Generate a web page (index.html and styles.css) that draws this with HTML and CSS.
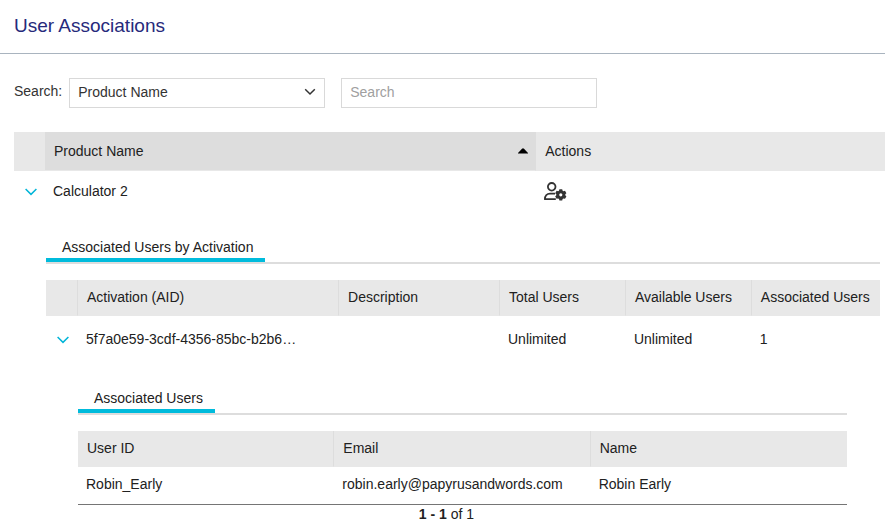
FILE: index.html
```html
<!DOCTYPE html>
<html lang="en">
<head>
    <meta charset="UTF-8">
    <meta name="viewport" content="width=device-width, initial-scale=1.0">
    <title>User Associations</title>
    <link rel="stylesheet" href="styles.css">
</head>
<body>

    <header class="page-header">
        <h1>User Associations</h1>
    </header>

    <main class="content">
        <!-- Search bar -->
        <form class="search-bar">
            <label for="search-field">Search:</label>
            <div class="select-box">
                <select id="search-field">
                    <option>Product Name</option>
                </select>
                <svg class="select-arrow" viewBox="0 0 12 8" aria-hidden="true">
                    <path d="M1.2 1.3 L6 6 L10.8 1.3"/>
                </svg>
            </div>
            <input type="text" id="search-text" placeholder="Search" aria-label="Search text">
        </form>

        <!-- Products -->
        <table class="grid products">
            <colgroup>
                <col class="col-toggle">
                <col class="col-product">
                <col>
            </colgroup>
            <thead>
                <tr>
                    <th></th>
                    <th class="sorted" aria-sort="ascending">
                        <div class="sort-label">
                            Product Name
                            <svg class="sort-arrow" viewBox="0 0 10 6" aria-hidden="true">
                                <path d="M0 5.6 L0 5 L4 0.7 Q5 -0.2 6 0.7 L10 5 L10 5.6 Z"/>
                            </svg>
                        </div>
                    </th>
                    <th>Actions</th>
                </tr>
            </thead>
            <tbody>
                <tr>
                    <td class="toggle-cell">
                        <button type="button" class="toggle" aria-label="Collapse Calculator 2">
                            <svg viewBox="0 0 12 8" aria-hidden="true"><path d="M0.6 1 L6 6.4 L11.4 1"/></svg>
                        </button>
                    </td>
                    <td>Calculator 2</td>
                    <td>
                        <button type="button" class="action" aria-label="Manage users">
                            <svg viewBox="0 0 22 19" aria-hidden="true">
                                <circle class="line" cx="7.7" cy="4.8" r="3.8"/>
                                <path class="line" d="M11 11.6 H6 C3 11.6 0.9 13.8 0.9 17.2 H11.8"/>
                                <path class="gear" fill-rule="evenodd" d="M15.4 7.2 H18.2 L18.6 8.7 L19.5 9.2 L21 8.8 L22.4 11.2 L21.3 12.3 V13.3 L22.4 14.4 L21 16.8 L19.5 16.4 L18.6 16.9 L18.2 18.4 H15.4 L15 16.9 L14.1 16.4 L12.6 16.8 L11.2 14.4 L12.3 13.3 V12.3 L11.2 11.2 L12.6 8.8 L14.1 9.2 L15 8.7 Z M16.8 11.2 A1.6 1.6 0 1 0 16.8 14.4 A1.6 1.6 0 1 0 16.8 11.2 Z"/>
                            </svg>
                        </button>
                    </td>
                </tr>
                <tr>
                    <td colspan="3" class="details">
                        <div class="tabs">
                            <button type="button" class="tab">Associated Users by Activation</button>
                        </div>

                        <!-- Activations -->
                        <table class="grid activations">
                            <colgroup>
                                <col class="col-toggle">
                                <col class="col-aid">
                                <col class="col-description">
                                <col class="col-count">
                                <col class="col-count">
                                <col>
                            </colgroup>
                            <thead>
                                <tr>
                                    <th></th>
                                    <th>Activation (AID)</th>
                                    <th>Description</th>
                                    <th>Total Users</th>
                                    <th>Available Users</th>
                                    <th>Associated Users</th>
                                </tr>
                            </thead>
                            <tbody>
                                <tr>
                                    <td class="toggle-cell">
                                        <button type="button" class="toggle" aria-label="Collapse activation">
                                            <svg viewBox="0 0 12 8" aria-hidden="true"><path d="M0.6 1 L6 6.4 L11.4 1"/></svg>
                                        </button>
                                    </td>
                                    <td>5f7a0e59-3cdf-4356-85bc-b2b6…</td>
                                    <td></td>
                                    <td>Unlimited</td>
                                    <td>Unlimited</td>
                                    <td>1</td>
                                </tr>
                                <tr>
                                    <td colspan="6" class="details">
                                        <div class="tabs">
                                            <button type="button" class="tab">Associated Users</button>
                                        </div>

                                        <!-- Users -->
                                        <table class="grid users">
                                            <thead>
                                                <tr>
                                                    <th>User ID</th>
                                                    <th>Email</th>
                                                    <th>Name</th>
                                                </tr>
                                            </thead>
                                            <tbody>
                                                <tr>
                                                    <td>Robin_Early</td>
                                                    <td>robin.early@papyrusandwords.com</td>
                                                    <td>Robin Early</td>
                                                </tr>
                                            </tbody>
                                        </table>
                                        <div class="pager"><b>1 - 1</b> of 1</div>
                                    </td>
                                </tr>
                            </tbody>
                        </table>
                    </td>
                </tr>
            </tbody>
        </table>
    </main>

</body>
</html>
```

FILE: styles.css
```css
/* General Styles */
* {
    box-sizing: border-box;
}

body {
    margin: 0;
    font-family: "Liberation Sans", Arial, sans-serif;
    font-size: 14px;
    line-height: 20px;
    color: #212121;
    background-color: #fff;
}

button,
input,
select {
    font: inherit;
    color: inherit;
}

button {
    padding: 0;
    border: none;
    background: none;
    cursor: pointer;
}

svg {
    display: block;
}

/* Header styles */
.page-header {
    padding: 14px 14px 15px;
    border-bottom: 1px solid #a9b4bf;
}

.page-header h1 {
    margin: 0;
    font-size: 19px;
    font-weight: normal;
    line-height: 24px;
    color: #262a7b;
}

.content {
    padding: 24px 0 0 14px;
}

/* Search bar */
.search-bar {
    display: flex;
    align-items: center;
    margin-bottom: 24px;
    color: #333;
}

.search-bar label {
    margin-right: 7px;
    padding-bottom: 4px;
}

.select-box {
    position: relative;
    width: 256px;
    margin-right: 16px;
}

.search-bar select,
.search-bar input {
    display: block;
    width: 256px;
    height: 30px;
    padding: 0 8px 2px;
    border: 1px solid #d9d9d9;
    border-radius: 0;
    background-color: #fff;
    appearance: none;
}

.search-bar input::placeholder {
    color: #a0a0a0;
}

.select-arrow {
    position: absolute;
    top: 10px;
    right: 9px;
    width: 12px;
    height: 8px;
    fill: none;
    stroke: #333;
    stroke-width: 1.5;
    pointer-events: none;
}

/* Tables */
.grid {
    width: 100%;
    table-layout: fixed;
    border-collapse: separate;
    border-spacing: 0;
}

.grid th {
    height: 36px;
    padding: 0 0 2px 9px;
    border-right: 1px solid #ddd;
    border-bottom: 1px solid #e8e8e8;
    background-color: #e8e8e8;
    background-clip: padding-box;
    font-weight: normal;
    text-align: left;
    white-space: nowrap;
}

.grid th:last-child {
    border-right-color: #e8e8e8;
}

.grid td {
    height: 40px;
    padding: 0 8px;
    white-space: nowrap;
}

.grid .toggle-cell {
    padding: 0 0 0 11px;
}

.products > thead > tr > th {
    height: 39px;
    padding: 0 0 0 9px;
}

.products > thead th:first-child {
    border-right: none;
}

.products > thead .sorted {
    background-color: #ddd;
}

.activations > tbody > tr > td {
    height: 46px;
}

.users > tbody > tr > td {
    height: 38px;
    padding-bottom: 3px;
    border-bottom: 1px solid #757575;
}

.col-toggle {
    width: 32px;
}

.products > colgroup .col-toggle {
    width: 31px;
}

.col-product {
    width: 56.4%;
}

.col-aid {
    width: 31.3%;
}

.col-description {
    width: 19.3%;
}

.col-count {
    width: 15.1%;
}

/* Sorting */
.sort-label {
    display: flex;
    align-items: center;
    justify-content: space-between;
    padding-right: 7px;
}

.sort-arrow {
    width: 10px;
    height: 6px;
    fill: #000;
}

/* Row buttons */
.toggle {
    display: block;
    padding: 4px 0 2px;
}

.toggle svg {
    width: 12px;
    height: 8px;
    fill: none;
    stroke: #00b5d8;
    stroke-width: 1.5;
}

.action {
    display: block;
}

.action svg {
    width: 22px;
    height: 19px;
    overflow: visible;
}

.action .line {
    fill: none;
    stroke: #333;
    stroke-width: 1.8;
    stroke-linejoin: round;
}

.action .gear {
    fill: #333;
}

/* Expanded rows */
.products > tbody > tr > .details {
    padding: 24px 5px 0 32px;
}

.activations > tbody > tr > .details {
    padding: 24px 33px 0 32px;
}

.tabs {
    display: flex;
    margin-bottom: 16px;
    border-bottom: 2px solid #ddd;
}

.tab {
    padding: 2px 12px 1px 16px;
    border-bottom: 4px solid #00bbdc;
}

.pager {
    padding-right: 32px;
    line-height: 18px;
    text-align: center;
}
```
